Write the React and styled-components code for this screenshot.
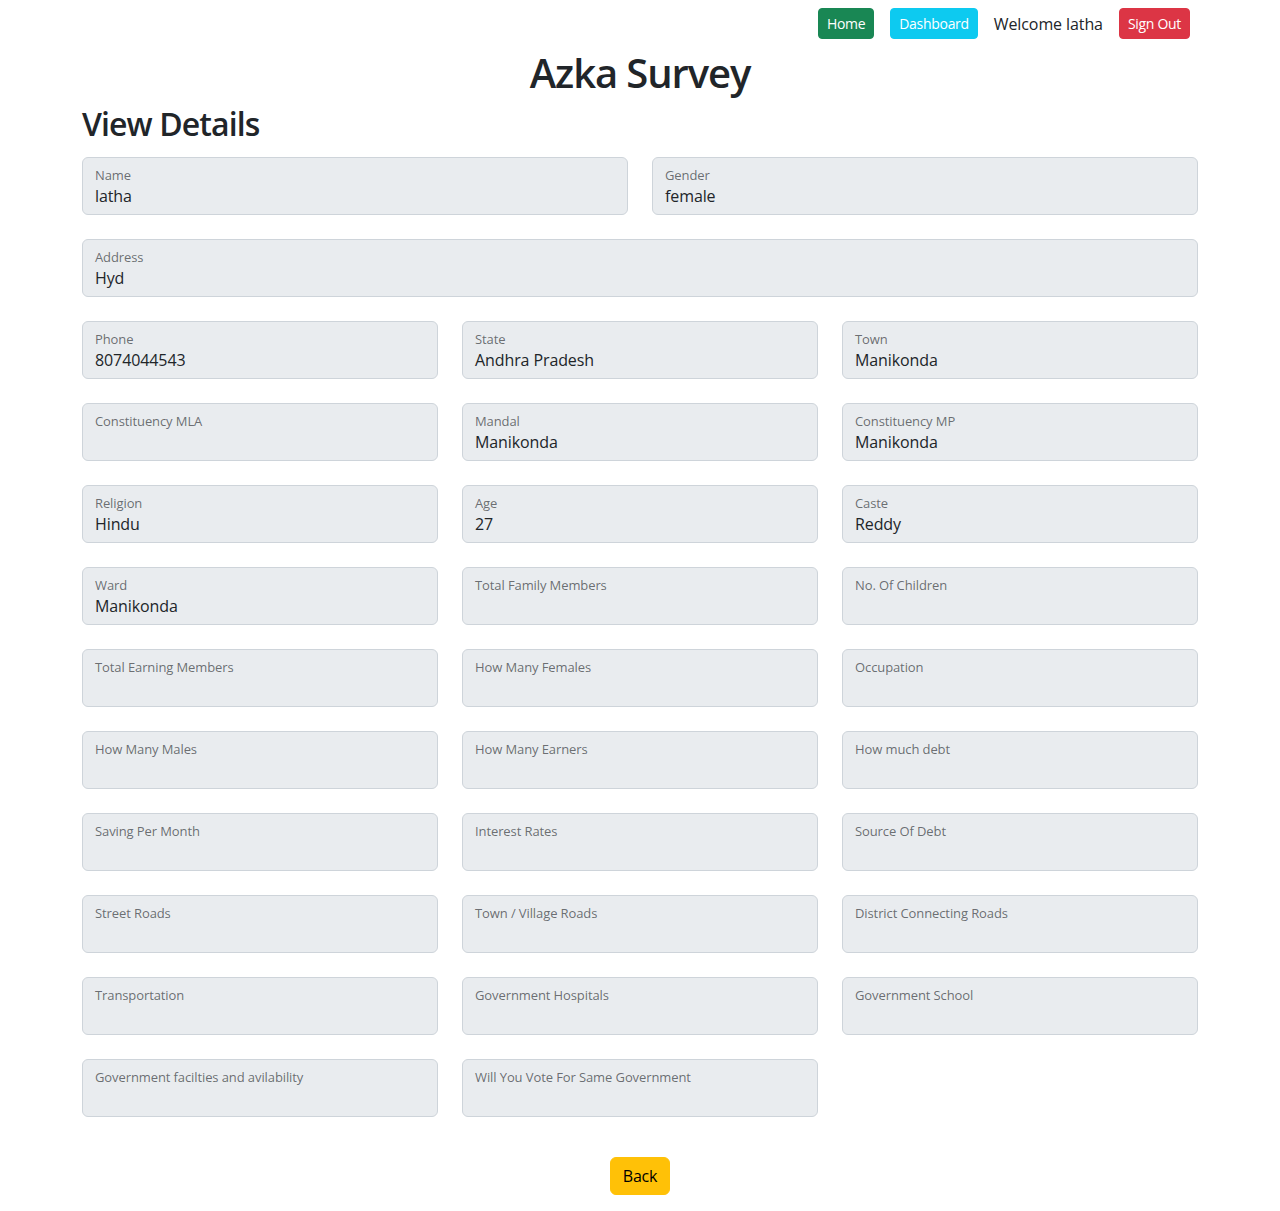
import styled, { createGlobalStyle } from "styled-components";

const GlobalStyle = createGlobalStyle`
  * { box-sizing: border-box; }
  body {
    margin: 0;
    background: #fff;
    color: #212529;
    font-family: "Open Sans", "Noto Sans", sans-serif;
    font-size: 16px;
  }
`;

const Container = styled.div`
  max-width: 1140px;
  margin: 0 auto;
  padding: 0 12px;
`;

const Nav = styled.nav`
  display: flex;
  justify-content: flex-end;
  align-items: center;
  padding: 8px 0 0;
`;

const NavItem = styled.div`
  margin: 0 8px;
  font-size: 16px;
  letter-spacing: -0.1px;
`;

const Button = styled.button`
  font-family: inherit;
  border: 1px solid ${(p) => p.$bg};
  background: ${(p) => p.$bg};
  color: ${(p) => p.$color || "#fff"};
  border-radius: ${(p) => (p.$small ? "4px" : "6px")};
  padding: ${(p) => (p.$small ? "4px 8px" : "6px 12px")};
  font-size: ${(p) => (p.$small ? "14px" : "16px")};
  letter-spacing: ${(p) => (p.$small ? "-0.3px" : "-0.2px")};
  line-height: 1.5;
  cursor: pointer;
`;

const Title = styled.h1`
  margin: 10px 0 0;
  text-align: center;
  font-size: 40px;
  font-weight: 600;
  letter-spacing: -1.1px;
  line-height: 1.2;
`;

const Heading = styled.h2`
  margin: 8px 0 14px;
  font-size: 32px;
  font-weight: 600;
  letter-spacing: -0.9px;
  line-height: 1.2;
`;

const Grid = styled.div`
  display: grid;
  grid-template-columns: repeat(${(p) => p.$cols}, 1fr);
  column-gap: 24px;
  row-gap: 24px;
  margin-bottom: 24px;
`;

const Field = styled.div`
  height: 58px;
  border: 1px solid #ced4da;
  border-radius: 6px;
  background: #e9ecef;
  padding: 7px 12px 0;
  display: flex;
  flex-direction: column;
`;

const Label = styled.span`
  font-size: 13px;
  line-height: 20px;
  letter-spacing: -0.1px;
  color: rgba(33, 37, 41, 0.65);
`;

const Value = styled.span`
  font-size: 16px;
  line-height: 22px;
  letter-spacing: -0.1px;
  color: #212529;
`;

const Footer = styled.div`
  display: flex;
  justify-content: center;
  padding: 16px 0 16px;
`;

const Detail = ({ label, value }) => (
  <Field>
    <Label>{label}</Label>
    <Value>{value}</Value>
  </Field>
);

const threeCol = [
  ["Phone", "8074044543"],
  ["State", "Andhra Pradesh"],
  ["Town", "Manikonda"],
  ["Constituency MLA", ""],
  ["Mandal", "Manikonda"],
  ["Constituency MP", "Manikonda"],
  ["Religion", "Hindu"],
  ["Age", "27"],
  ["Caste", "Reddy"],
  ["Ward", "Manikonda"],
  ["Total Family Members", ""],
  ["No. Of Children", ""],
  ["Total Earning Members", ""],
  ["How Many Females", ""],
  ["Occupation", ""],
  ["How Many Males", ""],
  ["How Many Earners", ""],
  ["How much debt", ""],
  ["Saving Per Month", ""],
  ["Interest Rates", ""],
  ["Source Of Debt", ""],
  ["Street Roads", ""],
  ["Town / Village Roads", ""],
  ["District Connecting Roads", ""],
  ["Transportation", ""],
  ["Government Hospitals", ""],
  ["Government School", ""],
  ["Government facilties and avilability", ""],
  ["Will You Vote For Same Government", ""],
];

export default function App() {
  return (
    <>
      <GlobalStyle />
      <Container>
        <Nav>
          <NavItem>
            <Button $small $bg="#198754">Home</Button>
          </NavItem>
          <NavItem>
            <Button $small $bg="#0dcaf0">Dashboard</Button>
          </NavItem>
          <NavItem>Welcome latha</NavItem>
          <NavItem>
            <Button $small $bg="#dc3545">Sign Out</Button>
          </NavItem>
        </Nav>
        <Title>Azka Survey</Title>
        <Heading>View Details</Heading>
        <Grid $cols={2}>
          <Detail label="Name" value="latha" />
          <Detail label="Gender" value="female" />
        </Grid>
        <Grid $cols={1}>
          <Detail label="Address" value="Hyd" />
        </Grid>
        <Grid $cols={3}>
          {threeCol.map(([label, value]) => (
            <Detail key={label} label={label} value={value} />
          ))}
        </Grid>
        <Footer>
          <Button $bg="#ffc107" $color="#000">Back</Button>
        </Footer>
      </Container>
    </>
  );
}
